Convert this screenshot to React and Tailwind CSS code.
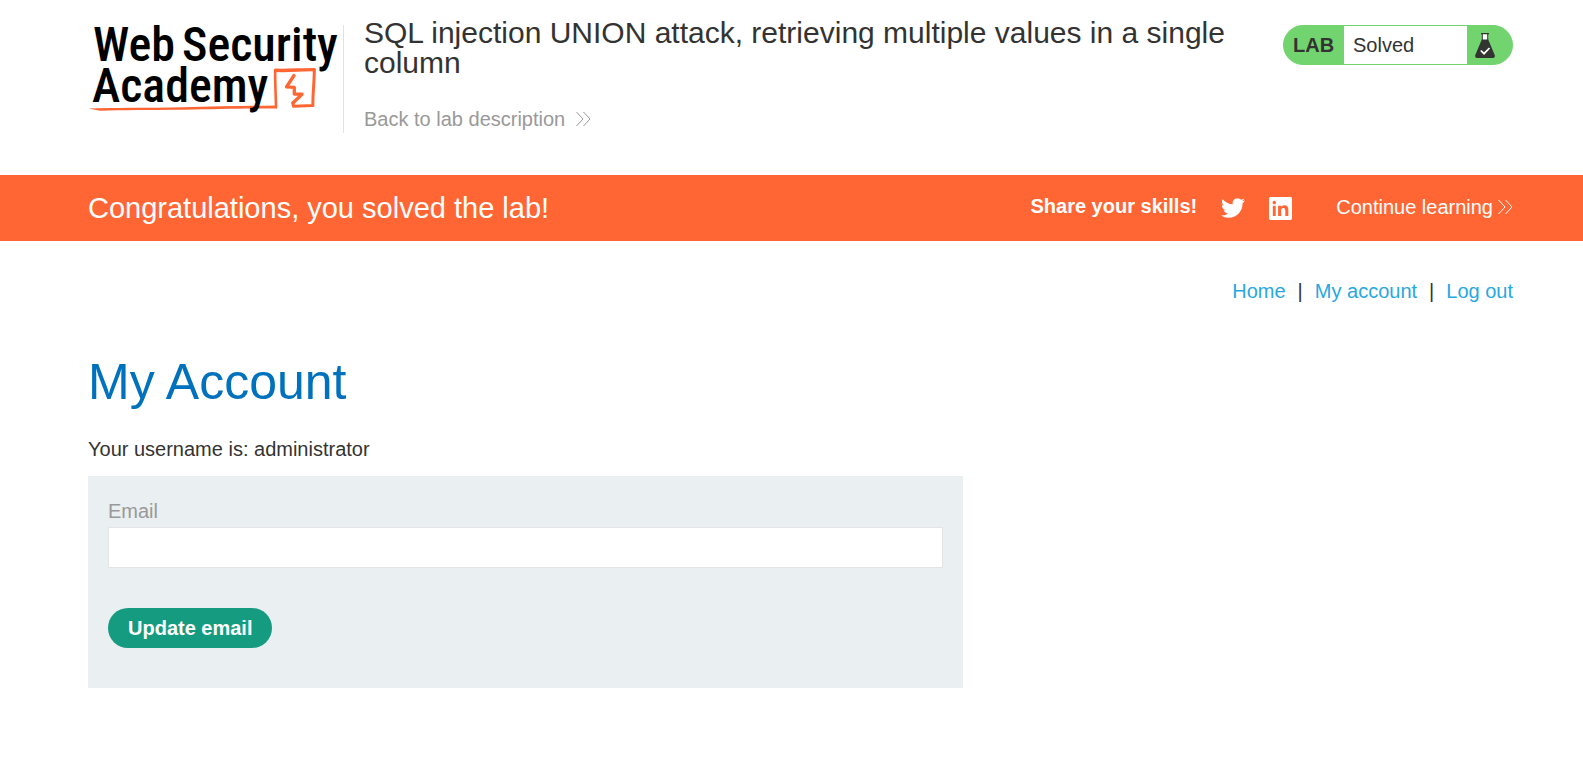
function Chevrons({ className }) {
  return (
    <svg viewBox="0 0 16 16" fill="none" stroke="currentColor" strokeWidth="1" className={className} aria-hidden="true">
      <path d="M1.500 1 L8 8 L1.500 15 M8.500 1 L15 8 L8.500 15" />
    </svg>
  );
}

function Logo() {
  return (
    <svg viewBox="0 0 255 108" className="h-[108px] w-[255px] shrink-0 overflow-visible" role="img" aria-label="Web Security Academy">
      <g fill="none" stroke="#ff6633" strokeLinejoin="round" strokeLinecap="round">
        <path d="M188 82 C187.800 70 187 58 187.200 45.500" strokeWidth="2.600" />
        <path d="M187.500 45.300 C200 46 212 44.600 226.300 44.600" strokeWidth="3.400" />
        <path d="M226.300 45 C226.300 57 224.600 70 224.900 80.600 L205.500 81.300 L204.900 77.800" strokeWidth="3" />
        <path d="M206 50.500 L198.500 61.800 L206.300 62.300 L206.300 69 L214 69.200 L204.900 78" strokeWidth="3.300" />
      </g>
      <path d="M0.500 83.600 C25 82.500 60 83 95 82.200 C130 81.400 160 81 189 80.400 L189 83.400 C150 83.500 130 84 95 84.800 C60 85.200 35 84.900 12 85.800 Z" fill="#ff6633" />
      <g fill="#000000" className="font-['Roboto_Condensed','Liberation_Sans_Narrow',sans-serif] text-[48px] font-medium">
        <text x="5" y="36">Web</text>
        <text x="94" y="36">Security</text>
        <text x="4" y="77">Academy</text>
      </g>
    </svg>
  );
}

function Flask() {
  return (
    <svg viewBox="0 0 20 25" className="h-[25px] w-5" aria-hidden="true">
      <path d="M7 1 H13 V7 H7 Z" fill="#fff" />
      <path d="M6 0 H14 V1.200 H13.200 V7 H6.800 V1.200 H6 Z M7.800 1.200 V7 H12.200 V1.200 Z" fill="#333332" fillRule="evenodd" />
      <path d="M6.800 6.600 H13.200 L19.700 22 C20.300 23.500 19.500 25 18 25 H2 C0.500 25 -0.300 23.500 0.300 22 Z" fill="#333332" />
      <path d="M5.800 17.500 L9 20.700 L14.500 15" fill="none" stroke="#fff" strokeWidth="1.700" />
    </svg>
  );
}

function Twitter() {
  return (
    <svg viewBox="0 0 24 24" className="size-6" fill="currentColor" aria-hidden="true">
      <path d="M23.953 4.570a10 10 0 01-2.825.775 4.958 4.958 0 002.163-2.723c-.951.555-2.005.959-3.127 1.184a4.920 4.920 0 00-8.384 4.482C7.690 8.095 4.067 6.130 1.640 3.162a4.822 4.822 0 00-.666 2.475c0 1.710.870 3.213 2.188 4.096a4.904 4.904 0 01-2.228-.616v.060a4.923 4.923 0 003.946 4.827 4.996 4.996 0 01-2.212.085 4.936 4.936 0 004.604 3.417 9.867 9.867 0 01-6.102 2.105c-.390 0-.779-.023-1.170-.067a13.995 13.995 0 007.557 2.209c9.053 0 13.998-7.496 13.998-13.985 0-.210 0-.420-.015-.630A9.935 9.935 0 0024 4.590z" />
    </svg>
  );
}

function LinkedIn() {
  return (
    <svg viewBox="0 0 24 24" className="size-[23px]" fill="currentColor" aria-hidden="true">
      <path fillRule="evenodd" d="M1.500 0 H22.500 A1.500 1.500 0 0 1 24 1.500 V22.500 A1.500 1.500 0 0 1 22.500 24 H1.500 A1.500 1.500 0 0 1 0 22.500 V1.500 A1.500 1.500 0 0 1 1.500 0 Z M4 9 V19.800 H7 V9 Z M5.500 4 a1.800 1.800 0 1 0 0.010 0 Z M9.500 9 V19.800 H12.700 V14.600 C12.700 13 13.200 11.600 15 11.600 C16.800 11.600 17 13.200 17 14.700 V19.800 H20.200 V13.900 C20.200 11 19.300 8.700 16.200 8.700 C14.500 8.700 13.200 9.500 12.600 10.500 V9 Z" />
    </svg>
  );
}

export default function App() {
  return (
    <div className="bg-white pb-20 font-['Liberation_Sans',Arial,sans-serif] text-xl leading-[26px] text-[#333332]">
      <header className="flex items-start pt-[25px] pr-[70px] pb-[42px] pl-[88px]">
        <div className="flex min-w-0 flex-1 items-start">
          <div className="border-r border-[#e2e2e2]">
            <Logo />
          </div>
          <div className="-mt-[7px] flex max-w-[900px] flex-col items-start pl-5">
            <h1 className="text-[30px] leading-[30px]">
              SQL injection UNION attack, retrieving multiple values in a single column
            </h1>
            <a href="#lab" className="mt-7 flex items-center gap-2.5 text-[#999999]">
              Back to lab description
              <Chevrons className="size-4" />
            </a>
          </div>
        </div>
        <div className="flex h-10 w-[230px] shrink-0 overflow-hidden rounded-full border border-[#72d46f] bg-[#72d46f]">
          <span className="flex w-[60px] items-center pl-[9px] font-bold">LAB</span>
          <p className="flex flex-1 items-center bg-white pl-[9px]">Solved</p>
          <span className="flex w-[45px] items-center pl-2">
            <Flask />
          </span>
        </div>
      </header>

      <section className="flex h-[66px] items-center bg-[#ff6633] pr-[70px] pl-[88px] text-white">
        <h4 className="flex-1 text-[29px]">Congratulations, you solved the lab!</h4>
        <span className="pb-1 font-bold">Share your skills!</span>
        <a href="#twitter" aria-label="Twitter" className="ml-6"><Twitter /></a>
        <a href="#linkedin" aria-label="LinkedIn" className="ml-6"><LinkedIn /></a>
        <a href="#continue" className="ml-11 flex items-center gap-1 pb-0.5">
          Continue learning
          <Chevrons className="size-4" />
        </a>
      </section>

      <main className="pt-[37px] pr-[70px] pl-[88px]">
        <nav className="flex justify-end gap-3">
          <a href="#home" className="text-[#29a7df]">Home</a>
          <span>|</span>
          <a href="#account" className="text-[#29a7df]">My account</a>
          <span>|</span>
          <a href="#logout" className="text-[#29a7df]">Log out</a>
        </nav>
        <h1 className="mt-12 text-[50px] leading-[60px] text-[#0071bc]">My Account</h1>
        <p className="mt-6">Your username is: administrator</p>
        <form className="mt-3.5 max-w-[875px] bg-[#eaeff2] px-5 pt-[22px] pb-10" onSubmit={(e) => e.preventDefault()}>
          <label htmlFor="email" className="block text-[#999999]">Email</label>
          <input id="email" type="email" className="mt-[3px] block h-[41px] w-full border border-[#e4e4e4] bg-white px-2 outline-none" />
          <button type="submit" className="mt-10 block h-10 rounded-full bg-[#159b80] px-5 font-bold text-white">
            Update email
          </button>
        </form>
      </main>
    </div>
  );
}
